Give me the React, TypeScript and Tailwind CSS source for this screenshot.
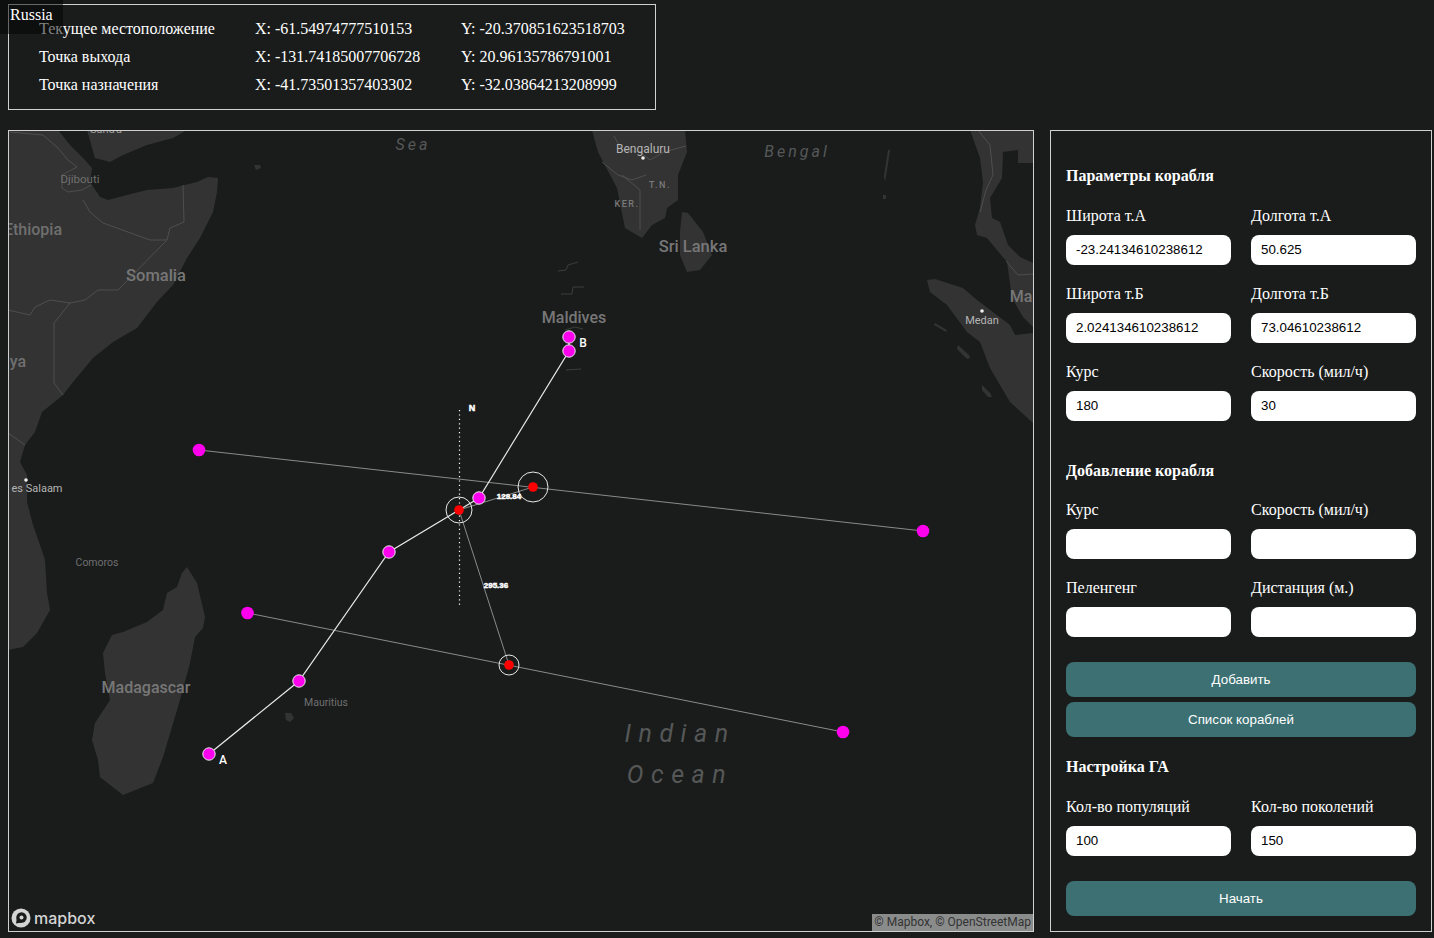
const positions = [
  { name: "Текущее местоположение", x: "X: -61.54974777510153", y: "Y: -20.370851623518703" },
  { name: "Точка выхода", x: "X: -131.74185007706728", y: "Y: 20.96135786791001" },
  { name: "Точка назначения", x: "X: -41.73501357403302", y: "Y: -32.03864213208999" },
];

const land = [
  "8,130 58,130 70,145 83,158 92,168 90,182 100,197 108,200 127,195 147,190 173,188 197,182 208,177 218,178 217,192 213,212 200,238 187,258 173,285 157,302 137,328 113,342 93,358 73,382 63,395 42,412 35,432 25,445 20,462 27,475 27,502 33,525 40,545 45,560 47,593 50,610 37,633 23,647 8,650",
  "87,130 95,158 110,162 123,155 147,145 173,138 187,130",
  "187,567 182,573 177,587 167,593 163,610 147,622 123,632 112,635 103,653 105,673 110,700 95,723 92,740 98,760 100,777 123,795 153,783 163,757 180,700 190,663 195,637 203,628 205,617 197,583",
  "592,130 598,152 617,188 625,228 642,238 652,225 665,218 667,208 678,200 678,175 687,152 685,130",
  "682,212 688,213 703,232 712,255 700,270 687,272 680,255 680,232",
  "927,280 935,279 963,288 977,300 1010,325 1015,335 1033,333 1033,423 1010,402 990,368 980,342 967,332 947,305 930,292",
  "970,130 1033,130 1033,163 1018,163 1018,150 1003,152 1002,178 990,198 992,218 1000,222 1008,245 1020,257 1033,263 1033,327 1023,317 1012,298 1007,262 987,238 977,235 975,225 980,208 983,182 980,158",
  "935,323 947,330 946,332 934,325",
  "958,345 969,355 970,358 967,359 957,349",
  "982,385 990,393 992,397 988,397 982,390",
  "285,713 291,713 294,718 290,722 286,720",
  "254,165 260,165 261,168 256,170",
  "888,150 890,150 887,170 885,182 884,176",
  "883,195 886,195 886,199 883,199",
];

const borders = [
  "M10 132 L43 135 L58 148 L68 160 L77 167 L62 175 L62 188 L68 192 L82 190 L91 185",
  "M83 200 L90 212 L103 223 L150 240 L167 240 L170 228 L184 222 L183 185",
  "M167 240 L118 290 L98 290 L85 300 L70 303 L50 300 L35 307 L30 315 L8 310",
  "M70 303 L54 323 L54 383 L63 395 M8 433 L25 445",
  "M614 136 L622 150 L640 152 L650 160 L664 152 L686 146 M602 162 L618 175 L632 180 L646 175 M622 175 L640 190 L640 230",
  "M978 130 L990 145 L993 175 L986 190 L982 205 L980 212 M1006 261 L1018 275 L1033 274",
];

const reefs = [
  "M558 271 L566 270 L568 265 L578 262",
  "M561 294 L572 294 L573 287 L584 287",
  "M565 330 L575 327 L583 329",
  "M566 370 L581 369",
];

const plainPins = [
  [199, 450],
  [923, 531],
  [247.5, 613],
  [843, 732],
];

const routePins = [
  [569, 337],
  [569, 351],
  [479, 498],
  [389, 552],
  [299, 681],
  [209, 754],
];

const targets = [
  [459, 510, 13],
  [533, 487, 15],
  [509, 665, 10],
];

function MapLabel({
  x,
  y,
  size,
  fill = "#6f6f6f",
  weight = 400,
  spacing = 0,
  children,
}: {
  x: number;
  y: number;
  size: number;
  fill?: string;
  weight?: number;
  spacing?: number;
  children: string;
}) {
  return (
    <text x={x} y={y} fontSize={size} fontWeight={weight} letterSpacing={spacing} fill={fill} textAnchor="middle" fontFamily="Roboto, sans-serif">
      {children}
    </text>
  );
}

function WaterLabel({ x, y, size, spacing, children }: { x: number; y: number; size: number; spacing: number; children: string }) {
  return (
    <text x={x} y={y} fontSize={size} fill="#565858" textAnchor="middle" fontStyle="italic" letterSpacing={spacing} fontFamily="Roboto, sans-serif">
      {children}
    </text>
  );
}

function DataLabel({ x, y, size = 8, children }: { x: number; y: number; size?: number; children: string }) {
  return (
    <text x={x} y={y} fontSize={size} fontWeight={700} fill="#fff" stroke="#fff" strokeWidth={0.5} textAnchor="middle" fontFamily="'Liberation Sans', sans-serif">
      {children}
    </text>
  );
}

function MapView() {
  return (
    <div className="relative h-[802px] w-[1026px] overflow-hidden border border-[#d0d0d0]">
      <svg className="block h-[800px] w-[1024px]" viewBox="9 131 1024 800">
        <rect x="9" y="131" width="1024" height="800" fill="#1a1c1c" />
        {land.map((points) => (
          <polygon key={points} points={points} fill="#333333" />
        ))}
        {borders.map((d) => (
          <path key={d} d={d} fill="none" stroke="#555555" strokeWidth="0.8" />
        ))}
        {reefs.map((d) => (
          <path key={d} d={d} fill="none" stroke="#3c3c3c" strokeWidth="1" />
        ))}

        <MapLabel x={106} y={133} size={11} fill="#999">Sana'a</MapLabel>
        <MapLabel x={80} y={183} size={11.5}>Djibouti</MapLabel>
        <MapLabel x={33} y={235} size={16} weight={500}>Ethiopia</MapLabel>
        <MapLabel x={156} y={281} size={16.5} weight={500} fill="#777">Somalia</MapLabel>
        <MapLabel x={18} y={367} size={16} weight={500}>ya</MapLabel>
        <MapLabel x={37} y={492} size={11} fill="#b5b5b5">es Salaam</MapLabel>
        <MapLabel x={97} y={566} size={10.5}>Comoros</MapLabel>
        <MapLabel x={146} y={693} size={16} weight={500} fill="#777">Madagascar</MapLabel>
        <MapLabel x={326} y={706} size={10.5}>Mauritius</MapLabel>
        <MapLabel x={643} y={153} size={12} fill="#b5b5b5">Bengaluru</MapLabel>
        <MapLabel x={660} y={188} size={9} weight={500} spacing={1.5} fill="#7a7a7a">T.N.</MapLabel>
        <MapLabel x={627} y={207} size={9} weight={500} spacing={1.5} fill="#7a7a7a">KER.</MapLabel>
        <MapLabel x={693} y={252} size={16.5} weight={500} fill="#777">Sri Lanka</MapLabel>
        <MapLabel x={574} y={323} size={16} weight={500} fill="#777">Maldives</MapLabel>
        <MapLabel x={982} y={324} size={11} fill="#b5b5b5">Medan</MapLabel>
        <MapLabel x={1023} y={302} size={16} weight={500} fill="#777">Mal</MapLabel>
        <WaterLabel x={413} y={150} size={16} spacing={3}>Sea</WaterLabel>
        <WaterLabel x={797} y={157} size={16} spacing={3}>Bengal</WaterLabel>
        <WaterLabel x={680} y={742} size={25} spacing={7.5}>Indian</WaterLabel>
        <WaterLabel x={680} y={783} size={25} spacing={7.5}>Ocean</WaterLabel>

        <circle cx="643" cy="158" r="1.8" fill="#eee" />
        <circle cx="26" cy="480" r="1.8" fill="#eee" />
        <circle cx="982" cy="311" r="1.8" fill="#eee" />

        <line x1="459.5" y1="410" x2="459.5" y2="606" stroke="#fff" strokeWidth="1.2" strokeDasharray="1.2 3.2" />
        <line x1="199" y1="450" x2="923" y2="531" stroke="#8a8a8a" strokeWidth="1" />
        <line x1="247.5" y1="613" x2="843" y2="732" stroke="#8a8a8a" strokeWidth="1" />
        <line x1="459" y1="510" x2="533" y2="487" stroke="#8a8a8a" strokeWidth="1" />
        <line x1="459" y1="510" x2="509" y2="665" stroke="#8a8a8a" strokeWidth="1" />
        <polyline
          points="209,754 299,681 389,552 479,498 569,351 569,337"
          fill="none"
          stroke="#e8e8e8"
          strokeWidth="1.2"
        />

        {targets.map(([cx, cy, r]) => (
          <g key={cx}>
            <circle cx={cx} cy={cy} r={r} fill="none" stroke="#e8e8e8" strokeWidth="1" />
            <circle cx={cx} cy={cy} r="4.8" fill="#ff0000" />
          </g>
        ))}
        {plainPins.map(([cx, cy]) => (
          <circle key={cx} cx={cx} cy={cy} r="6.3" fill="#ff00ee" />
        ))}
        {routePins.map(([cx, cy]) => (
          <circle key={cy} cx={cx} cy={cy} r="6.2" fill="#ff00ee" stroke="#e8e8e8" strokeWidth="1" />
        ))}

        <text x="223" y="764" fontSize="12" fontWeight={500} fill="#fff" textAnchor="middle" fontFamily="Roboto, sans-serif">A</text>
        <text x="583" y="347" fontSize="12" fontWeight={500} fill="#fff" textAnchor="middle" fontFamily="Roboto, sans-serif">B</text>
        <DataLabel x={472} y={411} size={9}>N</DataLabel>
        <DataLabel x={509} y={499}>128.84</DataLabel>
        <DataLabel x={496} y={588}>295.36</DataLabel>
      </svg>

      <div className="absolute bottom-[3px] left-[2px] flex items-center gap-[3px]">
        <svg className="h-[20px] w-[20px]" viewBox="0 0 20 20">
          <circle cx="10" cy="10" r="9.5" fill="#d4d4d4" />
          <circle cx="10.5" cy="9.5" r="5.2" fill="#1a1c1c" />
          <path d="M5 15.5 L6 9 L11 14.5 Z" fill="#1a1c1c" />
          <circle cx="10.5" cy="9.5" r="2" fill="#d4d4d4" />
        </svg>
        <span className="font-['Inter',sans-serif] text-[16px] leading-5 font-medium text-[#d4d4d4]">mapbox</span>
      </div>
      <div className="absolute right-0 bottom-0 h-[17px] bg-[#8a8c8c] px-[2px] font-['Roboto',sans-serif] text-[12px] leading-[17px] text-[#333]">
        © Mapbox, © OpenStreetMap
      </div>
    </div>
  );
}

function Field({ label, value }: { label: string; value?: string }) {
  return (
    <label className="flex flex-col gap-[10px]">
      <span className="h-[18px] text-base leading-[18px] text-white">{label}</span>
      <input
        readOnly
        value={value ?? ""}
        className="h-[30px] w-[165px] rounded-lg bg-white pr-[10px] pb-[2px] pl-[10px] font-['Liberation_Sans',sans-serif] text-[13.333px] text-black outline-none"
      />
    </label>
  );
}

function PanelButton({ children }: { children: string }) {
  return (
    <button className="h-[35px] w-[350px] rounded-lg bg-[#3c7072] font-['Liberation_Sans',sans-serif] text-[13.333px] text-white">
      {children}
    </button>
  );
}

function SectionTitle({ children }: { children: string }) {
  return <h2 className="h-[18px] text-base leading-[18px] font-bold text-white">{children}</h2>;
}

function SettingsPanel() {
  return (
    <div className="h-[802px] w-[382px] border border-[#d0d0d0] pt-9 pl-[15px]">
      <SectionTitle>Параметры корабля</SectionTitle>
      <div className="mt-[22px] grid w-[350px] grid-cols-[165px_165px] gap-x-5 gap-y-5">
        <Field label="Широта т.А" value="-23.24134610238612" />
        <Field label="Долгота т.А" value="50.625" />
        <Field label="Широта т.Б" value="2.024134610238612" />
        <Field label="Долгота т.Б" value="73.04610238612" />
        <Field label="Курс" value="180" />
        <Field label="Скорость (мил/ч)" value="30" />
      </div>

      <div className="mt-[41px]">
        <SectionTitle>Добавление корабля</SectionTitle>
      </div>
      <div className="mt-[21px] grid w-[350px] grid-cols-[165px_165px] gap-x-5 gap-y-5">
        <Field label="Курс" />
        <Field label="Скорость (мил/ч)" />
        <Field label="Пеленгенг" />
        <Field label="Дистанция (м.)" />
      </div>
      <div className="mt-[25px] flex flex-col gap-[5px]">
        <PanelButton>Добавить</PanelButton>
        <PanelButton>Список кораблей</PanelButton>
      </div>

      <div className="mt-[21px]">
        <SectionTitle>Настройка ГА</SectionTitle>
      </div>
      <div className="mt-[22px] grid w-[350px] grid-cols-[165px_165px] gap-x-5">
        <Field label="Кол-во популяций" value="100" />
        <Field label="Кол-во поколений" value="150" />
      </div>
      <div className="mt-[25px]">
        <PanelButton>Начать</PanelButton>
      </div>
    </div>
  );
}

export default function App() {
  return (
    <div className="relative h-[938px] w-[1434px] overflow-hidden bg-[#1a1c1c] pt-1 pl-2 font-['Liberation_Serif',serif] text-white">
      <div className="h-[106px] w-[648px] border border-[#d0d0d0] pt-[10px] pl-[30px]">
        {positions.map((row) => (
          <div key={row.name} className="grid h-[28px] grid-cols-[216px_206px_1fr] items-center text-base">
            <span>{row.name}</span>
            <span>{row.x}</span>
            <span>{row.y}</span>
          </div>
        ))}
      </div>

      <div className="mt-5 flex gap-4">
        <MapView />
        <SettingsPanel />
      </div>

      <div className="absolute top-0 left-0 h-[34px] w-[63px] bg-black/50 pt-[6px] pl-[10px] text-base leading-[18px] text-white">
        Russia
      </div>
    </div>
  );
}
